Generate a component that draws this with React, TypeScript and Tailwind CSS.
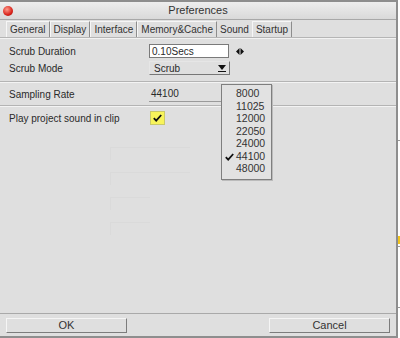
import React from "react";

const tabs = ["General", "Display", "Interface", "Memory&Cache", "Sound", "Startup"];
const rates = ["8000", "11025", "12000", "22050", "24000", "44100", "48000"];

function Check() {
  return (
    <svg width="9" height="8" viewBox="0 0 9 8">
      <path d="M0.8 4.2 L3.2 6.6 L8.2 1" fill="none" stroke="#111" strokeWidth="1.8" />
    </svg>
  );
}

function Arrows() {
  return (
    <svg width="8" height="7" viewBox="0 0 8 7">
      <path d="M3.5 0 L0 3.5 L3.5 7 Z M4.5 0 L8 3.5 L4.5 7 Z" fill="#111" />
    </svg>
  );
}

export default function App() {
  return (
    <div
      className="flex h-[338px] w-[400px] bg-white text-[10px] text-[#2a2a2a]"
      style={{ fontFamily: '"Liberation Sans", Arial, sans-serif' }}
    >
      <div className="relative flex h-[338px] w-[398px] flex-col border-r-2 border-b-2 border-t-2 border-[#8e8e8e] bg-[#dfdfdf]">
        {/* title bar */}
        <div className="relative flex h-[18px] items-center justify-center border-b border-[#a8a8a8] bg-gradient-to-b from-[#eeeeee] to-[#d9d9d9] text-[11px] text-[#333]">
          <div className="absolute left-[3px] top-[4px] h-[10px] w-[10px] rounded-full bg-[radial-gradient(circle_at_40%_35%,#ff9a8a,#d8231b_60%,#8e1410)]" />
          Preferences
        </div>

        {/* tabs */}
        <div className="flex h-[18px] items-end border-b border-[#b5b5b5] pl-[6px] pt-[2px] text-[10px] text-[#333]">
          {tabs.map((t) =>
            t === "Sound" ? (
              <div key={t} className="flex h-[16px] items-center px-[3px]">
                {t}
              </div>
            ) : (
              <div
                key={t}
                className="flex h-[16px] items-center border-l border-t border-r border-l-[#f6f6f6] border-t-[#f6f6f6] border-r-[#8d8d8d] px-[3px]"
              >
                {t}
              </div>
            )
          )}
        </div>

        {/* content */}
        <div className="relative flex-1 border-t border-[#f2f2f2]">
          <div className="flex h-[20px] items-center pl-[9px] pt-[4px]">
            <span className="w-[140px]">Scrub Duration</span>
            <div className="flex h-[14px] w-[80px] items-center border border-[#7a7a7a] bg-white pl-[2px]">0.10Secs</div>
            <span className="ml-[7px] flex items-center">
              <Arrows />
            </span>
          </div>
          <div className="flex h-[18px] items-center pl-[9px]">
            <span className="w-[140px]">Scrub Mode</span>
            <div className="flex h-[14px] w-[81px] items-center justify-between border-r border-b border-[#777] border-l border-t border-l-[#e6e6e6] border-t-[#e6e6e6] pl-[4px] pr-[3px]">
              <span>Scrub</span>
              <span className="flex flex-col items-center">
                <span className="block h-0 w-0 border-x-[4px] border-t-[5px] border-x-transparent border-t-[#111]" />
                <span className="mt-[1px] block h-[1px] w-[8px] bg-[#111]" />
              </span>
            </div>
          </div>
          <div className="mt-[4px] border-t border-[#b4b4b4] border-b border-b-[#f3f3f3]" />
          <div className="flex h-[22px] items-center pl-[9px]">
            <span className="w-[140px]">Sampling Rate</span>
            <div className="flex h-[15px] w-[81px] items-center justify-between border-b border-[#9a9a9a] pl-[2px] pr-[3px]">
              <span>44100</span>
              <span className="block h-0 w-0 border-x-[3px] border-t-[4px] border-x-transparent border-t-[#111]" />
            </div>
          </div>
          <div className="border-t border-[#b4b4b4] border-b border-b-[#f3f3f3]" />
          <div className="flex h-[22px] items-center pl-[9px]">
            <span className="w-[141px]">Play project sound in clip</span>
            <div className="flex h-[14px] w-[15px] items-center justify-center border border-[#c9c96a] bg-[#f8f45a]">
              <Check />
            </div>
          </div>

          {/* faint ghost widgets */}
          <div className="mt-[18px] ml-[110px] flex flex-col gap-[12px]">
            <div className="h-[13px] w-[80px] border-l border-t border-[#dadada]" />
            <div className="h-[13px] w-[80px] border-l border-t border-[#dadada]" />
            <div className="h-[13px] w-[40px] border-l border-t border-[#dadada]" />
            <div className="h-[13px] w-[40px] border-l border-t border-[#dadada]" />
          </div>

          {/* dropdown popup */}
          <div className="absolute left-[221px] top-[45px] flex w-[51px] flex-col border border-[#7f7f7f] bg-[#e2e2e2] py-[3px] shadow-[1px_1px_0_#bbb]">
            {rates.map((r) => (
              <div key={r} className="flex h-[12.5px] items-center text-[10.5px] text-[#333]">
                <span className="flex w-[14px] justify-center">{r === "44100" ? <Check /> : null}</span>
                <span>{r}</span>
              </div>
            ))}
          </div>
        </div>

        {/* bottom buttons */}
        <div className="flex h-[23px] items-start justify-between border-t border-[#a9a9a9] px-[6px] pt-[4px]">
          <button className="flex h-[15px] w-[121px] items-center justify-center border border-l-[#f5f5f5] border-t-[#f5f5f5] border-r-[#7c7c7c] border-b-[#7c7c7c] text-[11px] text-[#333]">
            OK
          </button>
          <button className="flex h-[15px] w-[121px] items-center justify-center border border-l-[#f5f5f5] border-t-[#f5f5f5] border-r-[#7c7c7c] border-b-[#7c7c7c] text-[11px] text-[#333]">
            Cancel
          </button>
        </div>
      </div>

      {/* sliver of the window behind */}
      <div className="flex flex-1 flex-col">
        <div className="mt-[140px] h-[1px] bg-[#999]" />
        <div className="mt-[95px] h-[8px] bg-[#f2c51c]" />
        <div className="mt-[2px] h-[1px] bg-[#999]" />
        <div className="mt-[60px] h-[1px] bg-[#999]" />
      </div>
    </div>
  );
}
